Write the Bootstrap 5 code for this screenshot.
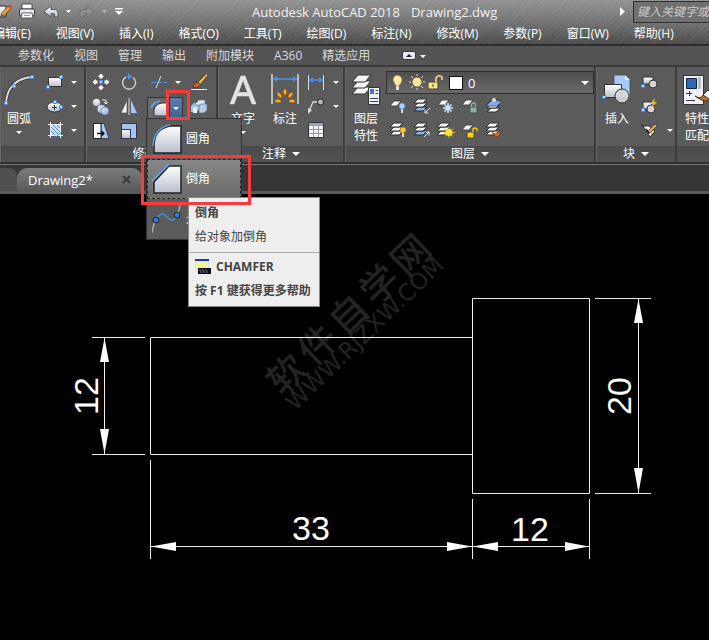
<!DOCTYPE html>
<html lang="zh-CN">
<head>
<meta charset="utf-8">
<meta name="viewport" content="width=device-width, initial-scale=1">
<title>Autodesk AutoCAD 2018 - Drawing2.dwg</title>
<link href="https://cdn.jsdelivr.net/npm/bootstrap@5.3.0/dist/css/bootstrap.min.css" rel="stylesheet">
<style>
body{font-family:"Open Sans","Noto Sans CJK SC",sans-serif;font-size:12px;line-height:16px;color:#fff;background:#000}
button{font:inherit;color:inherit;background:none;border:0;padding:0;white-space:nowrap}
svg{display:block;flex-shrink:0}
.app-head{background:repeating-linear-gradient(135deg,rgba(255,255,255,.05) 0 1px,transparent 1px 4px),linear-gradient(#929292,#777 45%,#4c4c4c);border-bottom:2px solid #2d2d2d}
.title-row{height:23px}
.app-title{font-size:13px;color:#f2f2f2;margin-left:124px;gap:11px}
.find-wrap{width:76px}
.find-box{width:160px;height:22px;font-size:12px;font-style:italic;color:#ccc;background:#707070;border:1px solid #2f2f2f;border-radius:0;padding:0 3px}
.find-box::placeholder{color:#ccc;opacity:1}
.menu-row{height:21px;gap:25px;margin-left:-7px}
.tab-row{height:19px;gap:20px;padding-left:18px;background:#545454;color:#d8d8d8}
.ribbon{background:#5b5b5b;border-top:2px solid #3a3a3a;border-bottom:2px solid #303030}
.rb-panel{border-right:2px solid #3c3c3c;border-left:1px solid #686868}
.rb-body{height:79px;padding-top:3px}
.rb-name{height:16px;background:linear-gradient(#4a4a4a,#525252);gap:6px}
.w-draw{width:86px}.w-modify{width:132px}.w-note{width:127px}.w-layer{width:251px}.w-block{width:81px}
.big-btn{line-height:17px;width:40px}
.big-btn-s{width:36px}
.big-btn-l{width:48px}
.big-pic{height:40px}
.cell{height:24px;width:28px}
.cell-s{width:24px}
.tri{width:0;height:0;border:3px solid transparent;border-top:3px solid #fff;border-bottom:0}
.tri-lg{border-width:4px;border-top:4px solid #fff;border-bottom:0}
.split{height:22px;border:1px solid #333;width:36px;margin-top:3px;background:#6a6a6a}
.split-drop{width:13px;height:20px;background:linear-gradient(#5d7fae,#415f8c);border-left:1px solid #333}
.fly{position:absolute;left:-1px;top:24px;width:96px;background:#5b5b5b;border:1px solid #303030;z-index:5}
.fly-item{height:40px;padding-left:5px;gap:4px;width:100%;overflow:hidden;text-align:left}
.fly-on{background:linear-gradient(#868686,#6a6a6a);border:1px dashed #222;padding-left:4px}
.ring{position:absolute;border:3px solid #fb3a3c;z-index:9;pointer-events:none}
.ring-a{left:19px;top:-4px;width:24px;height:30px}
.ring-b{left:-6px;top:61px;width:110px;height:50px}
.tip{position:absolute;left:41px;top:103px;width:132px;height:110px;background:#eee;border:1px solid #888;color:#444;z-index:7;white-space:nowrap}
.tip-top{padding:7px 6px;border-bottom:1px solid #aaa}
.tip-end{padding:6px;font-weight:700}
.layer-wrap{height:24px;padding-top:1px}
.layer-box{width:208px;height:23px;appearance:none;background:linear-gradient(#4e4e4e,#6a6a6a);border:1px solid #2f2f2f;color:#fff;font-size:13px;padding:0 0 0 81px;border-radius:0}
.layer-deco{position:absolute;left:0;top:2px;pointer-events:none}
.layer-tri{position:absolute;right:5px;top:11px;pointer-events:none}
.doc-row{height:30px;background:#363636;border-top:1px solid #777;border-bottom:3px solid #5a5a5a}
.doc-old{width:17px;margin-top:3px;background:#505050;border-radius:0 8px 0 0}
.doc-tab{width:125px;margin-top:3px;background:linear-gradient(#7c7c7c,#5a5a5a);border-radius:10px 10px 0 0;font-size:13px;padding:0 11px}
.canvas{position:relative;overflow:hidden}
.wm{position:absolute;color:#232323;transform-origin:0 0;line-height:1;white-space:nowrap;transform:rotate(-44deg)}
.wm-big{left:259px;top:179px;font-size:38px;font-weight:500;gap:5px}
.wm-url{left:282px;top:204px;font-family:"DejaVu Sans",sans-serif;font-size:23px}
</style>
<script src="https://cdn.jsdelivr.net/npm/bootstrap@5.3.0/dist/js/bootstrap.bundle.min.js"></script>
</head>
<body class="min-vh-100 d-flex flex-column overflow-hidden">
<svg width="0" height="0" class="position-absolute" aria-hidden="true">
<defs>
<linearGradient id="gw" x1="0" y1="0" x2="0" y2="1"><stop offset="0" stop-color="#fff"/><stop offset="1" stop-color="#b9bfce"/></linearGradient>
<linearGradient id="gb" x1="0" y1="0" x2="1" y2="1"><stop offset="0" stop-color="#e6f0fc"/><stop offset="1" stop-color="#7fa9dc"/></linearGradient>
<symbol id="sheet" viewBox="0 0 16 8"><path d="M5 1H12L8 6H1Z" fill="#f4f4f4" stroke="#333" stroke-width=".8"/></symbol>
<symbol id="stack" viewBox="0 0 14 16"><path d="M4 10H13L9 14H0Z" fill="#f4f4f4" stroke="#2e2e2e"/><path d="M4 6H13L9 10H0Z" fill="#f4f4f4" stroke="#2e2e2e"/><path d="M4 2H13L9 6H0Z" fill="#fff" stroke="#2e2e2e"/></symbol>
<symbol id="stackb" viewBox="0 0 14 16"><path d="M4 10H13L9 14H0Z" fill="#86b4ee" stroke="#2e2e2e"/><path d="M4 6H13L9 10H0Z" fill="#f4f4f4" stroke="#2e2e2e"/><path d="M4 2H13L9 6H0Z" fill="#fff" stroke="#2e2e2e"/></symbol>
</defs></svg>

<header class="app-head">
<div class="title-row d-flex align-items-center">
<div class="d-flex align-items-center flex-shrink-0" role="toolbar" aria-label="快速访问">
<button aria-label="快速访问工具"><svg width="128" height="22" viewBox="0 0 128 22">
<path d="M-4 5H6V16H-4Z" fill="url(#gw)" stroke="#222"/><path d="M2 12L8 5 11 7 5 14 1 15Z" fill="#f2a12c" stroke="#6b3a10" stroke-width=".8"/><path d="M8 5L10 4 12 6 11 7Z" fill="#d33"/>
<path d="M22 3H32V8H22Z" fill="#fff" stroke="#333" stroke-width=".8"/><rect x="19.500" y="8" width="15" height="7" rx="1.500" fill="url(#gw)" stroke="#333"/><path d="M22 12H32L33 17H21Z" fill="#fff" stroke="#444" stroke-width=".8"/><path d="M24 14.500H30" stroke="#6aa0e0"/>
<path d="M44 10.500L51 5V8.500H55Q58 9 58 12V16H54.500V13Q54 12 51 12.500V16Z" fill="url(#gw)" stroke="#444" stroke-width=".8"/>
<path d="M66 9H71L68.500 12Z" fill="#fff"/>
<path d="M94 10.500L87 5V8.500H83Q80 9 80 12V16H83.500V13Q84 12 87 12.500V16Z" fill="#8f8f8f" stroke="#686868" stroke-width=".8"/>
<path d="M102 9H107L104.500 12Z" fill="#bbb"/>
<path d="M115 7H123V8.500H115ZM115 10H123L119 14Z" fill="#fff"/></svg></button>
</div>
<div class="app-title d-flex text-nowrap"><span>Autodesk AutoCAD 2018</span><span>Drawing2.dwg</span></div>
<div class="flex-grow-1"></div>
<svg width="5" height="9" viewBox="0 0 5 9" class="me-1"><path d="M0 0L5 4.500 0 9Z" fill="#fff"/></svg>
<div class="find-wrap overflow-hidden flex-shrink-0 ms-1"><input class="find-box d-block" type="text" aria-label="搜索" placeholder="键入关键字或短语"></div>
</div>
<nav class="menu-row d-flex align-items-center" aria-label="菜单">
<button>编辑(E)</button><button>视图(V)</button><button>插入(I)</button><button>格式(O)</button><button>工具(T)</button><button>绘图(D)</button><button>标注(N)</button><button>修改(M)</button><button>参数(P)</button><button>窗口(W)</button><button>帮助(H)</button>
</nav>
</header>

<nav class="tab-row d-flex align-items-center" aria-label="功能区选项卡">
<button>参数化</button><button>视图</button><button>管理</button><button>输出</button><button>附加模块</button><button>A360</button><button>精选应用</button>
<button aria-label="最小化" class="ms-2 ps-1"><svg width="28" height="10" viewBox="0 0 28 10"><rect x=".5" y=".500" width="13" height="8" rx="2" fill="#e8e8ee" stroke="#333"/><path d="M4 6L7 3 10 6Z" fill="#222"/><path d="M18 4H24L21 7Z" fill="#fff"/></svg></button>
</nav>

<main class="flex-grow-1 d-flex flex-column">
<div class="ribbon d-flex">

<section class="rb-panel w-draw flex-shrink-0" aria-label="绘图">
<div class="rb-body d-flex">
<button class="big-btn big-btn-s d-flex flex-column align-items-center"><span class="big-pic d-flex"><svg width="34" height="36" viewBox="0 0 34 36"><path d="M4 33C5 17 15 8 30 7" fill="none" stroke="#333" stroke-width="3.500"/><path d="M4 33C5 17 15 8 30 7" fill="none" stroke="#ddd" stroke-width="2"/><g fill="#cfe2ff" stroke="#4b8be0"><path d="M2.500 31.500H5.500V34.500H2.500ZM10.500 14.500H13.500V17.500H10.500ZM28.500 5.500H31.500V8.500H28.500Z"/></g></svg></span>圆弧<span class="tri mt-1"></span></button>
<div class="ms-1">
<div class="d-flex align-items-center cell"><button class="d-flex align-items-center gap-2" aria-label="矩形"><svg width="22" height="18" viewBox="-6 0 22 18"><rect x="1.500" y="4.500" width="13" height="9" fill="url(#gw)" stroke="#333"/><path d="M-.5 12.500H2.500V15.500H-.5ZM12.500 2.500H15.500V5.500H12.500Z" fill="#cfe2ff" stroke="#3f86ee"/></svg><span class="tri"></span></button></div>
<div class="d-flex align-items-center cell"><button class="d-flex align-items-center gap-2" aria-label="椭圆"><svg width="22" height="18" viewBox="-6 0 22 18"><ellipse cx="7.500" cy="10" rx="7.500" ry="5" fill="url(#gw)" stroke="#333"/><path d="M5 10.500H10M7.500 8V13" stroke="#333"/><path d="M6.500 3.500H9.500V6.500H6.500ZM12.500 8.500H15.500V11.500H12.500Z" fill="#cfe2ff" stroke="#3f86ee"/></svg><span class="tri"></span></button></div>
<div class="d-flex align-items-center cell"><button class="d-flex align-items-center gap-2" aria-label="图案填充"><svg width="22" height="18" viewBox="-6 0 22 18"><path d="M3 4H14V14H3Z" fill="#cfe0f8"/><path d="M3 9L8 14M3 5L12 14M6 4L14 12M10 4L14 8" stroke="#4f86d6"/><path d="M1 3.500H16M1 14.500H16M3.500 1V17M13.500 1V17" stroke="#eee"/><path d="M8 17L15 10" stroke="#4f86d6"/></svg><span class="tri"></span></button></div>
</div>
</div>
<div class="rb-name"></div>
</section>

<section class="rb-panel w-modify flex-shrink-0" aria-label="修改">
<div class="rb-body">
<div class="d-flex align-items-center">
<button class="cell d-flex align-items-center justify-content-center" aria-label="移动"><svg width="18" height="18" viewBox="0 0 18 18"><path d="M9 0L13 4H11V6H7V4H5ZM9 18L13 14H11V12H7V14H5ZM0 9L4 5V7H6V11H4V13ZM18 9L14 5V7H12V11H14V13Z" fill="#eee" stroke="#444" stroke-width=".7"/><rect x="7.500" y="7.500" width="3" height="3" fill="#bcd5fb" stroke="#3f86ee"/></svg></button>
<button class="cell d-flex align-items-center justify-content-center" aria-label="旋转"><svg width="18" height="18" viewBox="0 0 18 18"><path d="M6 4A6.500 6.500 0 1 0 13 4.500" fill="none" stroke="#ccc" stroke-width="1.500"/><path d="M6 4Q9 2.500 13 4.500" fill="none" stroke="#3f86ee"/><path d="M8 0V7L12 3.500Z" fill="#4b8fee"/></svg></button>
<button class="cell d-flex align-items-center gap-2 ms-1 ps-1" aria-label="修剪"><svg width="16" height="16" viewBox="0 0 16 16"><path d="M0 8.500H6" stroke="#4f94ee"/><path d="M8 8.500H11M13 8.500H16" stroke="#4f94ee"/><path d="M5 14L10 2" stroke="#cfe0f8"/></svg><span class="tri"></span></button>
<button class="ms-2 ps-2" aria-label="删除"><svg width="18" height="18" viewBox="0 0 18 18"><path d="M6 10L16 0 17 2 9 12Z" fill="#f4b84c" stroke="#333" stroke-width=".8"/><path d="M2 15Q2 9 7 9L10 12Q8 15 2 15Z" fill="#d35c18" stroke="#333" stroke-width=".8"/><path d="M0 16.500H16" stroke="#eee"/></svg></button>
</div>
<div class="d-flex align-items-center">
<button class="cell d-flex align-items-center justify-content-center" aria-label="复制"><svg width="18" height="18" viewBox="0 0 18 18"><circle cx="4.500" cy="4.500" r="4" fill="url(#gw)" stroke="#444" stroke-width=".6"/><circle cx="9.500" cy="11" r="4" fill="url(#gb)"/><circle cx="13" cy="13" r="4" fill="url(#gb)" stroke="#557" stroke-width=".5"/><path d="M10 2H14V5M12 4L14 6 16 4" fill="none" stroke="#eee"/></svg></button>
<button class="cell d-flex align-items-center justify-content-center" aria-label="镜像"><svg width="18" height="18" viewBox="0 0 18 18"><path d="M7 2V15H1Z" fill="#f4f4f4" stroke="#444" stroke-width=".6"/><path d="M11 2V15H17Z" fill="#a3c9f4"/><path d="M9 0V17" stroke="#ddd"/></svg></button>
<div class="position-relative ms-1">
<div class="split d-flex justify-content-between"><button aria-label="倒角"><svg width="21" height="20" viewBox="0 0 21 20"><path d="M6 18V12Q7 6 14 5H21V18Z" fill="url(#gw)" stroke="#333"/><path d="M3 10Q5 4 12 3" fill="none" stroke="#5b9bea" stroke-width="2"/></svg></button><button class="split-drop d-flex align-items-center justify-content-center" aria-label="圆角和倒角" aria-expanded="true"><span class="tri"></span></button></div>
<div class="fly">
<button class="fly-item d-flex align-items-center"><svg width="30" height="30" viewBox="0 0 30 30"><path d="M2 29V22Q2 5 18 2H29V29Z" fill="url(#gw)" stroke="#222" stroke-width="1.500"/><path d="M1 22Q2 4 18 1" fill="none" stroke="#5b9bea" stroke-width="1.500"/></svg>圆角</button>
<button class="fly-item fly-on d-flex align-items-center"><svg width="30" height="30" viewBox="0 0 30 30"><path d="M2 29V18L17 2H29V29Z" fill="url(#gw)" stroke="#222" stroke-width="1.500"/><path d="M0 17L17 0" stroke="#5b9bea" stroke-width="2"/></svg>倒角</button>
<button class="fly-item d-flex align-items-center"><svg width="30" height="32" viewBox="0 0 30 32"><path d="M0 30Q1 22 4 17M25 12Q28 6 28 0" stroke="#aaa" stroke-width="1.500" fill="none"/><path d="M4 17Q9 7 15 14T25 12" stroke="#4a8de0" stroke-width="1.500" fill="none"/><circle cx="4" cy="17" r="3" fill="#2f77e0" stroke="#222"/><circle cx="25" cy="12" r="3" fill="#2f77e0" stroke="#222"/></svg>光顺曲线</button>
</div>
<div class="ring ring-a"></div><div class="ring ring-b"></div>
<div class="tip" role="tooltip">
<div class="tip-top"><div class="fw-bold mb-2">倒角</div><div>给对象加倒角</div></div>
<div class="tip-end"><div class="d-flex align-items-center gap-1"><svg width="17" height="16" viewBox="0 0 17 16"><path d="M.5 1H13.500V12H.5Z" fill="#f7f39a" stroke="#ddd"/><path d="M0 1H14" stroke="#1238c8" stroke-width="2"/><path d="M3 9H16V15H3Z" fill="#0a0a14"/><path d="M4 11H12M5 13H14" stroke="#889" stroke-dasharray="2 1"/></svg>CHAMFER</div><div class="mt-2">按 F1 键获得更多帮助</div></div>
</div>
</div>
<button class="ms-2" aria-label="分解"><svg width="18" height="18" viewBox="0 0 18 18"><path d="M0 8L3 5H8V12L5 14H0Z" fill="#9fc0e8"/><path d="M4 6L8 2H14V7H5Z" fill="#dfe9f6" stroke="#567" stroke-width=".6"/><path d="M8 8L10 6H16V12L13 15H8Z" fill="#b4cceb" stroke="#567" stroke-width=".6"/><path d="M2 9H6V15H2Z" fill="#e6eefa"/></svg></button>
</div>
<div class="d-flex align-items-center">
<button class="cell d-flex align-items-center justify-content-center" aria-label="拉伸"><svg width="18" height="18" viewBox="0 0 18 18"><path d="M9 1.500H12L17 16.500H9Z" fill="#a9cbf4" stroke="#445"/><path d="M1.500 1.500H9V16.500H1.500Z" fill="#fff" stroke="#222"/><path d="M5 11.500H12M9.500 9L12 11.500 9.500 14" stroke="#111" fill="none" stroke-width="1.300"/></svg></button>
<button class="cell d-flex align-items-center justify-content-center" aria-label="缩放"><svg width="18" height="18" viewBox="0 0 18 18"><path d="M1.500 1.500H16.500V16.500H1.500Z" fill="#9fc6f4" stroke="#334"/><path d="M1.500 7.500H10.500V16.500H1.500Z" fill="url(#gw)" stroke="#334"/></svg></button>
</div>
</div>
<div class="rb-name d-flex align-items-center justify-content-center">修改<span class="tri tri-lg"></span></div>
</section>

<section class="rb-panel w-note flex-shrink-0" aria-label="注释">
<div class="rb-body d-flex">
<button class="big-btn big-btn-l d-flex flex-column align-items-center"><span class="big-pic d-flex"><svg width="28" height="36" viewBox="0 0 28 36"><path d="M1 34L12 6H16L27 34H23L20 26H8L5 34ZM9.500 22.500H18.500L14 10Z" fill="#e4e4e4" stroke="#e4e4e4" stroke-width=".6" fill-rule="evenodd"/></svg></span>文字<span class="tri mt-1"></span></button>
<button class="big-btn big-btn-s d-flex flex-column align-items-center"><span class="big-pic d-flex"><svg width="28" height="36" viewBox="0 0 28 36"><path d="M1 4V34M27 4V34" stroke="#ddd" stroke-width="1.500"/><path d="M2 9H26" stroke="#4a92f0" stroke-width="1.500"/><path d="M2 9L6 6V12ZM26 9L22 6V12Z" fill="#4a92f0"/><g fill="#f6b81c" stroke="#c8600a" stroke-width=".7"><ellipse cx="14" cy="22" rx="1.500" ry="3"/><ellipse cx="8.500" cy="25" rx="1.500" ry="3" transform="rotate(-40 8.500 25)"/><ellipse cx="19.500" cy="25" rx="1.500" ry="3" transform="rotate(40 19.500 25)"/><ellipse cx="7" cy="31" rx="3" ry="1.500"/><ellipse cx="21" cy="31" rx="3" ry="1.500"/></g></svg></span>标注</button>
<div class="ms-1">
<button class="cell d-flex align-items-center gap-2" aria-label="线性"><svg width="18" height="18" viewBox="0 0 18 18"><path d="M1.500 2V17M16.500 2V17" stroke="#ddd"/><path d="M2 7H16" stroke="#4a92f0" stroke-width="1.500"/><path d="M2 7L6 4V10ZM16 7L12 4V10Z" fill="#4a92f0"/></svg><span class="tri"></span></button>
<button class="cell d-flex align-items-center gap-2" aria-label="引线"><svg width="18" height="18" viewBox="0 0 18 18"><path d="M2 14L6 5H11" stroke="#ddd" stroke-width="1.300" fill="none"/><path d="M1 17L1 11 5 13Z" fill="#ddd"/><circle cx="13.500" cy="5" r="3" fill="#bbb" stroke="#222"/></svg><span class="tri"></span></button>
<button class="cell d-flex align-items-center" aria-label="表格"><svg width="18" height="18" viewBox="0 0 18 18"><path d="M1.500 1.500H16.500V16.500H1.500Z" fill="#f4f4f4" stroke="#334"/><path d="M2 2H16V5H2Z" fill="#9aa2b8"/><path d="M2 8.500H16M2 12.500H16M6.500 5V16M11.500 5V16" stroke="#99a"/></svg></button>
</div>
</div>
<div class="rb-name d-flex align-items-center justify-content-center">注释<span class="tri tri-lg"></span></div>
</section>

<section class="rb-panel w-layer flex-shrink-0" aria-label="图层面板">
<div class="rb-body d-flex">
<button class="big-btn d-flex flex-column align-items-center"><span class="big-pic d-flex"><svg width="30" height="36" viewBox="0 0 30 36"><g stroke="#333" fill="#f4f4f4"><path d="M7 17H20L14 24H1Z"/><path d="M7 11H20L14 18H1Z"/><path d="M7 5H20L14 12H1Z"/></g><path d="M17.500 17.500H28.500V34.500H17.500Z" fill="#eef1f8" stroke="#333"/><path d="M19 19H23V24H19Z" fill="#3f78c8"/><path d="M24.500 20.500H27M24.500 23.500H27M19 28.500H27M19 31.500H27" stroke="#445"/></svg></span><span class="text-center">图层<br>特性</span></button>
<div class="d-flex flex-column">
<div class="layer-wrap position-relative">
<select class="layer-box d-block" aria-label="图层列表"><option>0</option></select>
<svg class="layer-deco" width="80" height="22" viewBox="0 0 80 22"><path d="M11 3Q7 4 7 8 8 11 10 14H13Q16 10 16 8 16 4 11 3Z" fill="#ffe9a0" stroke="#8a6a20" stroke-width=".6"/><path d="M10 14H13V18H10Z" fill="#ddd"/><circle cx="31" cy="10" r="4.500" fill="#fbe29a"/><path d="M31 2V4M31 16V18M23 10H25M37 10H39M25 4L27 6M35 14L37 16M37 4L35 6M27 14L25 16" stroke="#ddd"/><path d="M42 10H52V17H42Z" fill="#ffe484" stroke="#443"/><path d="M47 12V15" stroke="#443"/><path d="M50 10V6Q53 2 56 5V8" fill="none" stroke="#fbe29a" stroke-width="1.500"/><path d="M63.500 4.500H76.500V17.500H63.500Z" fill="#fff" stroke="#111"/></svg>
<span class="layer-tri tri tri-lg"></span>
</div>
<div class="d-flex">
<button class="cell cell-s" aria-label="关"><svg class="mx-auto" width="18" height="18" viewBox="0 0 18 18"><use href="#sheet" x="0" y="3" width="16" height="8"/><circle cx="13" cy="9" r="3" fill="#a9d0fa" stroke="#47a" stroke-width=".6"/><path d="M12 12H14V16H12Z" fill="#ddd"/></svg></button>
<button class="cell cell-s" aria-label="隔离"><svg class="mx-auto" width="18" height="18" viewBox="0 0 18 18"><use href="#stackb" x="1" y="0" width="14" height="16"/><path d="M17 11L12 16M12 12.500V16H15.500" stroke="#ddd" fill="none"/></svg></button>
<button class="cell cell-s" aria-label="冻结"><svg class="mx-auto" width="18" height="18" viewBox="0 0 18 18"><use href="#sheet" x="0" y="2" width="16" height="8"/><path d="M11 6V16M6 11H16M7.500 7.500L14.500 14.500M14.500 7.500L7.500 14.500" stroke="#cfe6ff" stroke-width="1.600"/></svg></button>
<button class="cell cell-s" aria-label="锁定"><svg class="mx-auto" width="18" height="18" viewBox="0 0 18 18"><use href="#sheet" x="0" y="2" width="16" height="8"/><path d="M9 10H16V16H9Z" fill="#8bb0a8" stroke="#455"/><path d="M10.500 10V7Q12.500 5 14.500 7V10" fill="none" stroke="#8bb0a8" stroke-width="1.300"/></svg></button>
<button class="cell cell-s" aria-label="置为当前"><svg class="mx-auto" width="18" height="18" viewBox="0 0 18 18"><use href="#stack" x="2" y="1" width="14" height="16"/><path d="M6 4H17L12 9H1Z" fill="#7fb0ee" stroke="#246" stroke-width=".7"/><circle cx="9" cy="3" r="2" fill="#ddd"/></svg></button>
</div>
<div class="d-flex">
<button class="cell cell-s" aria-label="打开所有图层"><svg class="mx-auto" width="18" height="18" viewBox="0 0 18 18"><use href="#stack" x="1" y="0" width="14" height="16"/><circle cx="14" cy="9" r="3" fill="#ffc83c" stroke="#b60" stroke-width=".8"/><path d="M13 12H15V16H13Z" fill="#ddd"/></svg></button>
<button class="cell cell-s" aria-label="取消隔离"><svg class="mx-auto" width="18" height="18" viewBox="0 0 18 18"><use href="#stackb" x="1" y="0" width="14" height="16"/><path d="M11 16L16 11M12.500 11H16V14.500" stroke="#eee" fill="none"/></svg></button>
<button class="cell cell-s" aria-label="解冻"><svg class="mx-auto" width="18" height="18" viewBox="0 0 18 18"><use href="#stack" x="0" y="0" width="14" height="16"/><path d="M12 6V17M7 11.500H18M8 7.500L16 15.500M16 7.500L8 15.500" stroke="#ffc400"/><circle cx="12" cy="11.500" r="3.500" fill="#ffe03a"/></svg></button>
<button class="cell cell-s" aria-label="解锁"><svg class="mx-auto" width="18" height="18" viewBox="0 0 18 18"><use href="#sheet" x="0" y="3" width="16" height="8"/><path d="M6 11H13V17H6Z" fill="#ffd21f" stroke="#443"/><path d="M12 11V8Q14 6 16 8V10" fill="none" stroke="#ffd21f" stroke-width="1.300"/></svg></button>
<button class="cell cell-s" aria-label="匹配图层"><svg class="mx-auto" width="18" height="18" viewBox="0 0 18 18"><use href="#stack" x="1" y="0" width="14" height="16"/><path d="M7 11L10 13 16 9 14 15Q10 17 7 11Z" fill="#d0701c" stroke="#532" stroke-width=".6"/></svg></button>
</div>
</div>
</div>
<div class="rb-name d-flex align-items-center justify-content-center">图层<span class="tri tri-lg"></span></div>
</section>

<section class="rb-panel w-block flex-shrink-0" aria-label="块面板">
<div class="rb-body d-flex">
<button class="big-btn d-flex flex-column align-items-center"><span class="big-pic d-flex"><svg width="32" height="36" viewBox="0 0 32 36"><path d="M13 5H24L29 10V28H13Z" fill="#a9caf4" stroke="#445" stroke-width=".8"/><path d="M24 5V10H29Z" fill="#e4effc"/><path d="M3.500 14.500H20.500V27.500H3.500Z" fill="url(#gw)" stroke="#333"/><circle cx="21" cy="26" r="7" fill="#d8d8dc" fill-opacity=".9" stroke="#333"/><path d="M1.500 25.500H4.500V28.500H1.500Z" fill="#cfe2ff" stroke="#3f78c8"/></svg></span>插入</button>
<div class="ms-1">
<button class="cell d-flex align-items-center" aria-label="创建块"><svg width="18" height="18" viewBox="0 0 18 18"><path d="M2 4H12V11H2Z" fill="url(#gw)" stroke="#333"/><circle cx="12" cy="11" r="4" fill="#d4d4d8" stroke="#333"/><path d="M.5 11.500H3.500V14.500H.5Z" fill="#cfe2ff" stroke="#3f86ee"/></svg></button>
<button class="cell d-flex align-items-center" aria-label="编辑块"><svg width="18" height="18" viewBox="0 0 18 18"><path d="M2 5H11V12H2Z" fill="url(#gw)" stroke="#333"/><circle cx="10" cy="12" r="4" fill="#d4d4d8" stroke="#333"/><path d="M.5 11.500H3.500V14.500H.5Z" fill="#cfe2ff" stroke="#3f86ee"/><path d="M14 1L9 7H12L10 11 16 5H13Z" fill="#ffb52a"/></svg></button>
<button class="cell d-flex align-items-center gap-1" aria-label="编辑属性"><svg width="18" height="18" viewBox="0 0 18 18"><path d="M2 5L8 5 14 10 9 16Z" fill="#f4f4f4" stroke="#333"/><path d="M5 8L8 12 13 8" fill="none" stroke="#111" stroke-width="1.300"/><path d="M7 10L14 3 16 5 9 12Z" fill="#f0a030" stroke="#333" stroke-width=".6"/><path d="M0 3L3 6" stroke="#222"/></svg><span class="tri ms-1"></span></button>
</div>
</div>
<div class="rb-name d-flex align-items-center justify-content-center">块<span class="tri tri-lg"></span></div>
</section>

<section class="flex-fill overflow-hidden" aria-label="特性面板">
<div class="rb-body">
<button class="big-btn d-flex flex-column align-items-center"><span class="big-pic d-flex"><svg width="32" height="36" viewBox="0 0 32 36"><path d="M2.500 5.500H22.500V34.500H2.500Z" fill="#eef1f8" stroke="#333"/><path d="M5.500 8.500H15.500V18.500H5.500Z" fill="#2f6ab4" stroke="#124"/><path d="M18.500 7V19" stroke="#b4bccc" stroke-width="3"/><path d="M5 23.500H11M8.500 21V26M5 30.500H14" stroke="#334"/><path d="M14 26Q20 30 22 25L29 28Q26 35 14 26Z" fill="#c76a1c" stroke="#532"/><path d="M22 25L27 20 31 24 28 29Z" fill="#eee" stroke="#333"/></svg></span><span class="text-center">特性<br>匹配</span></button>
</div>
<div class="rb-name"></div>
</section>
</div>

<div class="doc-row d-flex">
<div class="doc-old"></div>
<div class="doc-tab d-flex justify-content-between align-items-center"><span>Drawing2*</span><button aria-label="关闭"><svg width="9" height="9" viewBox="0 0 9 9"><path d="M1 1L8 8M8 1L1 8" stroke="#3a3a3a" stroke-width="2"/></svg></button></div>
</div>

<div class="canvas flex-grow-1">
<div class="wm wm-big d-flex" aria-hidden="true"><span>软</span><span>件</span><span>自</span><span>学</span><span>网</span></div>
<div class="wm wm-url">WWW.RJZXW.COM</div>
<svg class="position-relative w-100" viewBox="0 194 709 444" preserveAspectRatio="xMinYMin meet" role="img" aria-label="Drawing2">
<g fill="none" stroke="#eee">
<path d="M150.500 337.500H472.500V454.500H150.500Z"/><path d="M472.500 298.500H589.500V493.500H472.500Z"/>
<path d="M92 337.500H145M92 454.500H145M104.500 338V454"/>
<path d="M595 298.500H651M595 493.500H651M638.500 299V493"/>
<path d="M150.500 460V559M472.500 499V559M589.500 499V559M151 546.500H589"/>
</g>
<g fill="#fff">
<path d="M104.500 338L109 362H100ZM104.500 454L109 429H100ZM638.500 299L643 323H634ZM638.500 493L643 468H634Z"/>
<path d="M151 546.500L176 542V551ZM472 546.500L447 542V551ZM473 546.500L498 542V551ZM589 546.500L565 542V551Z"/>
<g font-family="Liberation Sans, Arial, sans-serif" font-size="34" text-anchor="middle">
<text x="311" y="540">33</text><text x="530" y="541">12</text>
<text transform="translate(98 396) rotate(-90)">12</text><text transform="translate(631 396) rotate(-90)">20</text>
</g></g>
</svg>
</div>
</main>
</body>
</html>
